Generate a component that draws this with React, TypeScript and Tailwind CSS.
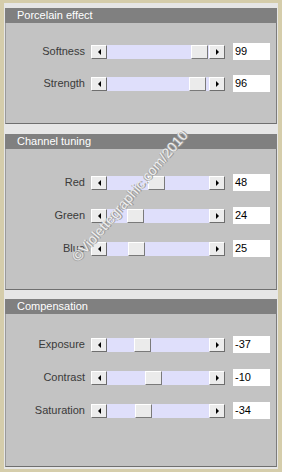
import React from "react";

type Row = { label: string; value: number; min: number; max: number };

const font = { fontFamily: '"Liberation Sans", Arial, sans-serif' };

function Btn({ dir }: { dir: "l" | "r" }) {
  return (
    <div className="w-[16px] h-[14px] shrink-0 bg-[#ececec] border-t border-l border-t-white border-l-white border-r border-b border-r-[#6e6e6e] border-b-[#6e6e6e] flex items-center justify-center">
      {dir === "l" ? (
        <div className="w-0 h-0 border-y-[3px] border-y-transparent border-r-[3px] border-r-black" />
      ) : (
        <div className="w-0 h-0 border-y-[3px] border-y-transparent border-l-[3px] border-l-black" />
      )}
    </div>
  );
}

function Slider({ row }: { row: Row }) {
  const frac = (row.value - row.min) / (row.max - row.min);
  const left = Math.round(frac * 85);
  return (
    <div className="flex w-[134px] h-[14px] shrink-0">
      <Btn dir="l" />
      <div className="relative flex-1 bg-[#dfdffb]">
        <div
          className="absolute top-0 w-[17px] h-[14px] bg-[#ebebeb] border-t border-l border-t-white border-l-white border-r border-b border-r-[#7a7a7a] border-b-[#7a7a7a]"
          style={{ left }}
        />
      </div>
      <Btn dir="r" />
    </div>
  );
}

function SliderRow({ row }: { row: Row }) {
  return (
    <div className="flex items-center h-[17px]">
      <div className="w-[80px] text-right text-[11px] text-[#3a3a3a] leading-none pr-[1px]">{row.label}</div>
      <div className="w-[5px]" />
      <Slider row={row} />
      <div className="w-[8px]" />
      <div className="w-[37px] h-[17px] bg-white text-[11px] text-black leading-[17px] pl-[2px]">{row.value}</div>
    </div>
  );
}

function Section({
  title,
  rows,
  bodyH,
  padT,
  gap,
}: {
  title: string;
  rows: Row[];
  bodyH: string;
  padT: string;
  gap: string;
}) {
  return (
    <div className="flex flex-col">
      <div className="h-[15px] bg-[#808080] text-white text-[11px] leading-[15px] pl-[12px]">{title}</div>
      <div className={`${bodyH} ${padT} bg-[#c3c3c3] border-l border-r border-b border-l-[#9a9a9a] border-r-[#7c7c7c] border-b-[#6f6f6f] flex flex-col ${gap}`}>
        {rows.map((r) => (
          <SliderRow key={r.label} row={r} />
        ))}
      </div>
    </div>
  );
}

export default function App() {
  return (
    <div className="w-[282px] h-[472px] bg-[#d5cdab] pt-[3px] px-[4px] pb-[3px] overflow-hidden" style={font}>
      <div className="relative h-full bg-[#e6e6e6] pt-[5px] px-[1px]">
        <Section
          title="Porcelain effect"
          bodyH="h-[101px]"
          padT="pt-[20px]"
          gap="gap-[15px]"
          rows={[
            { label: "Softness", value: 99, min: 0, max: 100 },
            { label: "Strength", value: 96, min: 0, max: 100 },
          ]}
        />
        <div className="h-[10px]" />
        <Section
          title="Channel tuning"
          bodyH="h-[141px]"
          padT="pt-[25px]"
          gap="gap-[16px]"
          rows={[
            { label: "Red", value: 48, min: 0, max: 100 },
            { label: "Green", value: 24, min: 0, max: 100 },
            { label: "Blue", value: 25, min: 0, max: 100 },
          ]}
        />
        <div className="h-[9px]" />
        <Section
          title="Compensation"
          bodyH="h-[153px]"
          padT="pt-[22px]"
          gap="gap-[16px]"
          rows={[
            { label: "Exposure", value: -37, min: -100, max: 100 },
            { label: "Contrast", value: -10, min: -100, max: 100 },
            { label: "Saturation", value: -34, min: -100, max: 100 },
          ]}
        />
        <div
          className="absolute left-[126px] top-[193px] -translate-x-1/2 -translate-y-1/2 -rotate-[49deg] whitespace-nowrap text-[14px] text-[#eeeeee] pointer-events-none"
          style={{ textShadow: "1px 1px 0 #9a9a9a, -1px 0 0 #a8a8a8" }}
        >
          ©Violettegraphic.com/2010
        </div>
      </div>
    </div>
  );
}
